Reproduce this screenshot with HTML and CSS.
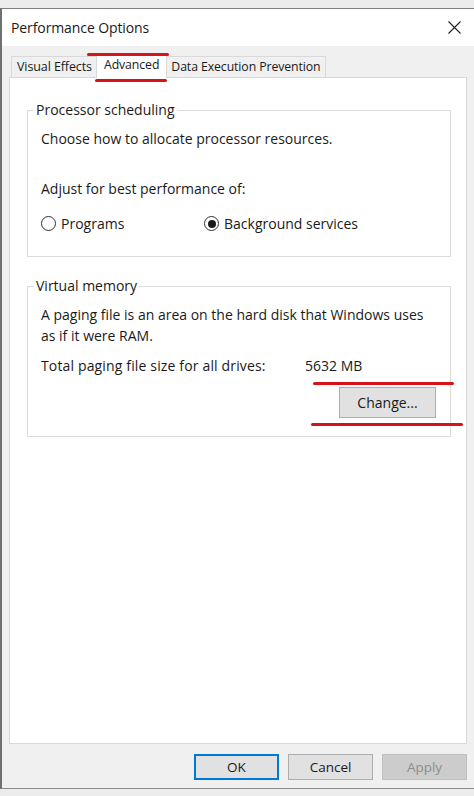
FILE: index.html
```html
<!DOCTYPE html>
<html>
<head>
<meta charset="utf-8">
<link rel="stylesheet" href="styles.css">
</head>
<body>
<div class="window">
  <div class="titlebar">
    <span class="title">Performance Options</span>
    <svg class="close" width="13" height="13" viewBox="0 0 13 13"><path d="M0.5 0.5 L12.5 12.5 M12.5 0.5 L0.5 12.5" stroke="#222" stroke-width="1.1" fill="none"/></svg>
  </div>
  <div class="tabrow">
    <div class="tab first-tab">Visual Effects</div>
    <div class="tab active">Advanced<span class="mark mark-top"></span><span class="mark mark-bottom"></span></div>
    <div class="tab">Data Execution Prevention</div>
  </div>
  <div class="panel">
    <fieldset class="group group-cpu">
      <legend>Processor scheduling</legend>
      <p class="line first">Choose how to allocate processor resources.</p>
      <p class="line adjust">Adjust for best performance of:</p>
      <div class="radios">
        <label class="radio prog"><span class="dot"></span>Programs</label>
        <label class="radio"><span class="dot on"></span>Background services</label>
      </div>
    </fieldset>
    <fieldset class="group group-vm">
      <legend>Virtual memory</legend>
      <p class="line first">A paging file is an area on the hard disk that Windows uses<br>as if it were RAM.</p>
      <div class="line total"><span class="total-label">Total paging file size for all drives:</span><span>5632 MB</span></div>
      <div class="change-row">
        <button class="btn change">Change...</button>
        <span class="mark mark-mb"></span>
        <span class="mark mark-btn"></span>
      </div>
    </fieldset>
  </div>
  <div class="footer">
    <button class="btn ok">OK</button>
    <button class="btn">Cancel</button>
    <button class="btn disabled">Apply</button>
  </div>
</div>
</body>
</html>
```
FILE: styles.css
```css
html, body {
  margin: 0;
  padding: 0;
}
body {
  background: #ececec;
  width: 474px;
  height: 796px;
  overflow: hidden;
  font-family: "Open Sans", "Noto Sans", "Liberation Sans", sans-serif;
  color: #1a1a1a;
}
.window {
  margin-top: 8px;
  border-top: 1px solid #7d7d7d;
  border-left: 2px solid #707070;
  border-bottom: 1px solid #8a8a8a;
  background: #f0f0f0;
  display: flex;
  flex-direction: column;
  box-sizing: border-box;
  height: 781px;
}
.titlebar {
  height: 37px;
  background: #ffffff;
  display: flex;
  align-items: center;
  justify-content: space-between;
  padding: 0 13px 0 9px;
  flex: none;
}
.title {
  font-size: 14px;
  letter-spacing: -0.1px;
  color: #1a1a1a;
}
.tabrow {
  height: 31px;
  display: flex;
  align-items: flex-end;
  padding-left: 9px;
  flex: none;
}
.tab {
  position: relative;
  height: 20px;
  line-height: 20px;
  font-size: 12.3px;
  padding: 0 4px 0 5px;
  border: 1px solid #d9d9d9;
  border-bottom: none;
  background: #f0f0f0;
  margin-right: -1px;
  letter-spacing: -0.1px;
}
.tab.first-tab {
  padding: 0 6px 0 5px;
  font-size: 12.5px;
}
.tab.active {
  background: #ffffff;
  height: 23px;
  line-height: 20px;
  margin-bottom: -1px;
  z-index: 2;
  padding: 0 7px 0 7px;
  margin-left: -2px;
  margin-right: -2px;
}
.panel {
  flex: 1;
  margin: 0 7px;
  background: #ffffff;
  border: 1px solid #d9d9d9;
  padding: 22px 15px 0 17px;
  position: relative;
  z-index: 1;
}
.group {
  margin: 0;
  border: 1px solid #dcdcdc;
  padding: 0 0 22px 13px;
  font-size: 14px;
  min-width: 0;
}
.group legend {
  font-size: 14px;
  line-height: 20px;
  padding: 0 2px;
  margin-left: -7px;
}
.group-vm {
  margin-top: 19px;
  padding-bottom: 18px;
}
.line {
  margin: 0;
  line-height: 21px;
}
.first {
  margin-top: 8px;
}
.adjust {
  margin-top: 29px;
}
.radios {
  display: flex;
  margin-top: 14px;
  line-height: 21px;
}
.radio {
  display: flex;
  align-items: center;
}
.radio.prog {
  width: 163px;
}
.dot {
  width: 13px;
  height: 13px;
  border: 1px solid #333333;
  border-radius: 50%;
  margin-right: 5px;
  display: flex;
  align-items: center;
  justify-content: center;
  box-sizing: content-box;
}
.dot.on::after {
  content: "";
  width: 8px;
  height: 8px;
  border-radius: 50%;
  background: #1a1a1a;
}
.total {
  margin-top: 9px;
  display: flex;
}
.total-label {
  width: 264px;
  letter-spacing: 0.15px;
}
.change-row {
  position: relative;
  display: flex;
  justify-content: flex-end;
  margin-top: 11px;
  padding-right: 14px;
}
.btn {
  font-family: "Open Sans", "Noto Sans", "Liberation Sans", sans-serif;
  font-size: 13.5px;
  color: #1a1a1a;
  background: #e1e1e1;
  border: 1px solid #adadad;
  padding: 0;
  margin: 0;
  box-sizing: border-box;
}
.change {
  width: 97px;
  height: 31px;
  flex: none;
  font-size: 14px;
}
.footer {
  height: 44px;
  flex: none;
  display: flex;
  justify-content: flex-end;
  align-items: flex-start;
  gap: 9px;
  padding: 10px 7px 0 0;
  box-sizing: border-box;
}
.footer .btn {
  width: 85px;
  height: 26px;
}
.btn.ok {
  border: 2px solid #0078d7;
}
.btn.disabled {
  background: #cccccc;
  border-color: #bfbfbf;
  color: #8c8c8c;
}
.mark {
  position: absolute;
  height: 3px;
  border-radius: 2px;
  background: #d7121b;
}
.mark-top {
  left: -10px;
  top: -2px;
  width: 82px;
}
.mark-bottom {
  left: -2px;
  top: 24px;
  width: 72px;
}
.mark-mb {
  left: 272px;
  top: -5px;
  width: 141px;
}
.mark-btn {
  left: 270px;
  top: 36px;
  width: 152px;
}
```
